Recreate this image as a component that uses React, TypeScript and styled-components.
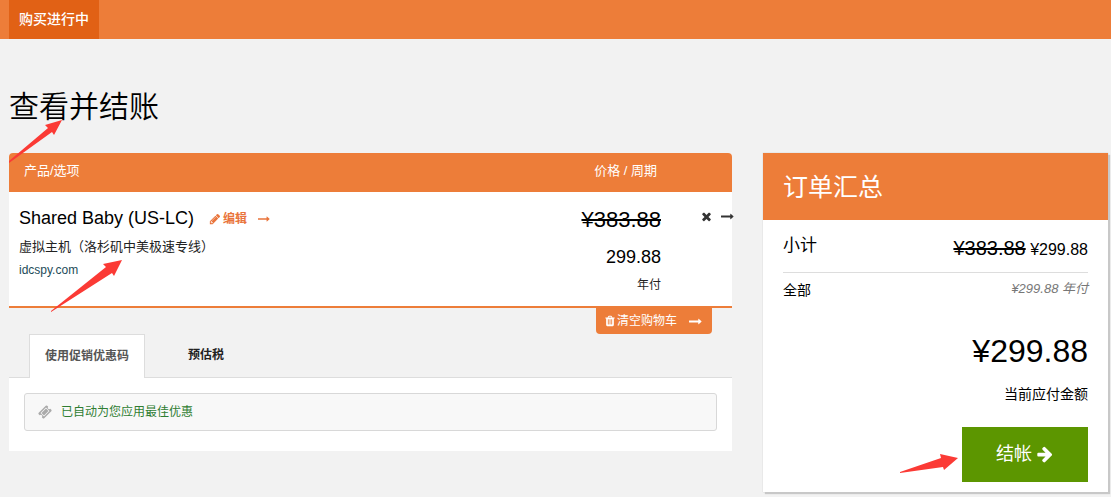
import React from "react";
import styled, { createGlobalStyle } from "styled-components";

const orange = "#ed7d39";

const GlobalStyle = createGlobalStyle`
  *, *::before, *::after { box-sizing: border-box; }
  body {
    margin: 0;
    background: #f2f2f2;
    color: #000;
    font-family: "Liberation Sans", "Noto Sans CJK SC", sans-serif;
    font-size: 14px;
    line-height: 20px;
  }
  h1, h2, h3, p, dl, dt, dd { margin: 0; font-weight: 400; }
  a { text-decoration: none; color: inherit; }
  button { font-family: inherit; border: 0; cursor: pointer; }
`;

const iconPaths = {
  pencil:
    "M491 1536l91-91-235-235-91 91v107h128v128h107zm523-928q0-22-22-22-10 0-17 7l-542 542q-7 7-7 17 0 22 22 22 10 0 17-7l542-542q7-7 7-17zm-54-192l416 416-832 832h-416v-416zm683 96q0 53-37 90l-166 166-416-416 166-165q36-38 90-38 53 0 91 38l235 234q37 39 37 91z",
  longArrow:
    "M1728 893q0 14-10 24l-384 354q-16 14-35 6-19-9-19-29v-224h-1248q-14 0-23-9t-9-23v-192q0-14 9-23t23-9h1248v-224q0-21 19-29t35 5l384 350q10 10 10 23z",
  times:
    "M1490 1322q0 40-28 68l-136 136q-28 28-68 28t-68-28l-294-294-294 294q-28 28-68 28t-68-28l-136-136q-28-28-28-68t28-68l294-294-294-294q-28-28-28-68t28-68l136-136q28-28 68-28t68 28l294 294 294-294q28-28 68-28t68 28l136 136q28 28 28 68t-28 68l-294 294 294 294q28 28 28 68z",
  trash:
    "M704 1376v-704q0-14-9-23t-23-9h-64q-14 0-23 9t-9 23v704q0 14 9 23t23 9h64q14 0 23-9t9-23zm256 0v-704q0-14-9-23t-23-9h-64q-14 0-23 9t-9 23v704q0 14 9 23t23 9h64q14 0 23-9t9-23zm256 0v-704q0-14-9-23t-23-9h-64q-14 0-23 9t-9 23v704q0 14 9 23t23 9h64q14 0 23-9t9-23zm-544-992h448l-48-117q-7-9-17-11h-317q-10 2-17 11zm928 32v64q0 14-9 23t-23 9h-96v948q0 83-47 143.5t-113 60.5h-832q-66 0-113-58.5t-47-141.5v-952h-96q-14 0-23-9t-9-23v-64q0-14 9-23t23-9h309l70-167q15-37 54-63t79-26h320q40 0 79 26t54 63l70 167h309q14 0 23 9t9 23z",
  ticket:
    "M1024 452l316 316-572 572-316-316zm-211 979l618-618q19-19 19-45t-19-45l-362-362q-18-18-45-18t-45 18l-618 618q-19 19-19 45t19 45l362 362q18 18 45 18t45-18zm889-637l-907 908q-37 37-90.5 37t-90.5-37l-126-126q56-56 56-136t-56-136-136-56-136 56l-125-126q-37-37-37-90.5t37-90.5l907-906q37-37 90.5-37t90.5 37l125 125q-56 56-56 136t56 136 136 56 136-56l126 125q37 37 37 90.5t-37 90.5z",
  arrow:
    "M1600 960q0 54-37 91l-651 651q-39 37-91 37-51 0-90-37l-75-75q-38-38-38-91t38-91l293-293h-704q-52 0-84.5-37.5t-32.5-90.5v-128q0-53 32.5-90.5t84.5-37.5h704l-293-294q-38-36-38-90t38-90l75-75q38-38 90-38 53 0 91 38l651 651q37 35 37 90z",
};

const IconSvg = styled.svg`
  display: block;
  flex: none;
  fill: currentColor;
`;

function Icon({ name, size }: { name: keyof typeof iconPaths; size: number }) {
  return (
    <IconSvg width={size} height={size} viewBox="0 0 1792 1792" aria-hidden="true">
      <path d={iconPaths[name]} />
    </IconSvg>
  );
}

const Pointer = styled.svg<{ $left: number; $top: number }>`
  position: absolute;
  left: ${(p) => p.$left}px;
  top: ${(p) => p.$top}px;
  fill: #fb3a35;
  pointer-events: none;
  z-index: 2;
`;

const TopBar = styled.nav`
  display: flex;
  padding-left: 9px;
  background: ${orange};
`;

const TopLink = styled.a`
  padding: 9px 10px 10px;
  background: #e16115;
  color: #fff;
  font-weight: 500;
`;

const Page = styled.div`
  padding: 48px 3px 5px 9px;
`;

const Title = styled.h1`
  position: relative;
  margin-bottom: 26px;
  font-size: 30px;
  line-height: 40px;
  font-weight: 350;
`;

const Columns = styled.div`
  display: flex;
  align-items: flex-start;
  gap: 31px;
`;

const Main = styled.main`
  flex: 723 1 0;
  min-width: 0;
`;

const CartTable = styled.table`
  width: 100%;
  table-layout: fixed;
  border-spacing: 0;
  border-bottom: 2px solid ${orange};
  background: #fff;
  border-radius: 4px 4px 0 0;
`;

const HeadCell = styled.th<{ $align?: string; $width?: number }>`
  width: ${(p) => (p.$width ? `${p.$width}px` : "auto")};
  padding: 8px 4px 11px 15px;
  background: ${orange};
  color: #fff;
  font-size: 13px;
  font-weight: 400;
  text-align: ${(p) => p.$align || "left"};
  &:first-child { border-top-left-radius: 4px; }
  &:last-child { border-top-right-radius: 4px; }
`;

const ProductCell = styled.td`
  position: relative;
  padding: 15px 10px 12px;
  vertical-align: top;
`;

const ProductLine = styled.div`
  display: flex;
  align-items: center;
  gap: 15px;
`;

const ProductName = styled.h3`
  font-size: 18px;
`;

const EditLink = styled.a`
  display: flex;
  align-items: center;
  gap: 2px;
  padding-top: 2px;
  color: #e9743b;
  font-size: 12px;
  font-weight: 700;
  svg + span { margin-right: 9px; }
`;

const Description = styled.p`
  margin: 8px 0 3px;
  font-size: 13px;
  color: #222;
`;

const Domain = styled.a`
  display: block;
  font-size: 12px;
  color: #1d4b58;
`;

const PriceCell = styled.td`
  padding: 18px 0 11px;
  text-align: right;
  vertical-align: top;
`;

const OldPrice = styled.del<{ $size: number }>`
  font-size: ${(p) => p.$size}px;
`;

const CartPrice = styled.p`
  margin: 15px 0 8px;
  font-size: 18px;
`;

const Cycle = styled.p`
  font-size: 12px;
  color: #222;
`;

const ActionCell = styled.td`
  padding: 18px 0 0 39px;
  vertical-align: top;
`;

const RemoveButton = styled.button`
  display: flex;
  gap: 8px;
  width: max-content;
  padding: 0;
  background: none;
  color: #333;
`;

const ClearButton = styled.button`
  display: flex;
  align-items: center;
  gap: 1px;
  margin: 0 20px 0 auto;
  padding: 3px 10px 3px 8px;
  border-radius: 0 0 4px 4px;
  background: ${orange};
  color: #fff;
  font-size: 12px;
  line-height: 20px;
  span { margin-right: 11px; }
`;

const Tabs = styled.div`
  display: flex;
  padding-left: 20px;
`;

const Tab = styled.button<{ $active?: boolean }>`
  margin-bottom: -1px;
  margin-right: 27px;
  padding: ${(p) => (p.$active ? "11px 15px 12px" : "10px 15px 13px")};
  border: 1px solid ${(p) => (p.$active ? "#ddd" : "transparent")};
  border-bottom: 0;
  background: ${(p) => (p.$active ? "#fff" : "transparent")};
  color: ${(p) => (p.$active ? "#555" : "#222")};
  font-size: 12px;
  line-height: 20px;
  font-weight: 700;
  z-index: 1;
`;

const TabPanel = styled.div`
  padding: 15px 15px 20px;
  border-top: 1px solid #ddd;
  background: #fff;
`;

const PromoBox = styled.div`
  display: flex;
  align-items: center;
  gap: 9px;
  padding: 8px 13px;
  border: 1px solid #d8d8d8;
  border-radius: 3px;
  background: #f8f8f8;
  color: #aaa;
`;

const PromoText = styled.p`
  color: #2f7d32;
  font-size: 12px;
`;

const Summary = styled.aside`
  flex: 345 1 0;
  min-width: 0;
  background: #fff;
  box-shadow: 2px 2px 1px #c8c8c8, 0 0 1px #bbb;
`;

const SummaryTitle = styled.h2`
  padding: 18px 20px 17px;
  background: ${orange};
  color: #fff;
  font-size: 25px;
  line-height: 32px;
`;

const SummaryBody = styled.div`
  padding: 16px 20px 10px;
`;

const SummaryRow = styled.dl<{ $main?: boolean }>`
  display: flex;
  justify-content: space-between;
  align-items: flex-start;
  ${(p) => p.$main && "padding-bottom: 10px; border-bottom: 1px solid #ddd; margin-bottom: 6px;"}
  dt {
    font-size: ${(p) => (p.$main ? 17 : 14)}px;
    line-height: ${(p) => (p.$main ? 20 : 22)}px;
  }
  dd {
    font-size: 16px;
    line-height: 24px;
  }
`;

const Recurring = styled.em`
  display: block;
  font-size: 13px;
  line-height: 20px;
  color: #777;
`;

const Total = styled.div`
  margin-top: 30px;
  text-align: right;
`;

const TotalAmount = styled.p`
  font-size: 32px;
  line-height: 40px;
`;

const TotalLabel = styled.p`
  margin: 13px 0 23px;
`;

const CheckoutButton = styled.button`
  position: relative;
  display: inline-flex;
  align-items: center;
  gap: 4px;
  padding: 15px 34px 16px;
  background: #5c9600;
  color: #fff;
  font-size: 18px;
  line-height: 24px;
  vertical-align: top;
`;

export default function App() {
  return (
    <>
      <GlobalStyle />
      <TopBar>
        <TopLink href="#">购买进行中</TopLink>
      </TopBar>
      <Page>
        <Title>
          查看并结账
          <Pointer $left={0} $top={33} width="54" height="44" viewBox="0 0 54 44" aria-hidden="true">
            <path d="M53 0L36 5L39 8L0 41V43L43 12L45 15Z" />
          </Pointer>
        </Title>
        <Columns>
          <Main>
            <CartTable>
              <thead>
                <tr>
                  <HeadCell>产品/选项</HeadCell>
                  <HeadCell $align="right" $width={150}>
                    价格 / 周期
                  </HeadCell>
                  <HeadCell $width={71} aria-label="操作" />
                </tr>
              </thead>
              <tbody>
                <tr>
                  <ProductCell>
                    <ProductLine>
                      <ProductName>Shared Baby (US-LC)</ProductName>
                      <EditLink href="#">
                        <Icon name="pencil" size={12} />
                        <span>编辑</span>
                        <Icon name="longArrow" size={12} />
                      </EditLink>
                    </ProductLine>
                    <Description>虚拟主机（洛杉矶中美极速专线）</Description>
                    <Domain href="#">idcspy.com</Domain>
                    <Pointer $left={42} $top={68} width="72" height="53" viewBox="0 0 72 53" aria-hidden="true">
                      <path d="M71 0L52 4L55 7L0 51V52L61 13L63 16Z" />
                    </Pointer>
                  </ProductCell>
                  <PriceCell>
                    <OldPrice $size={22}>¥383.88</OldPrice>
                    <CartPrice>299.88</CartPrice>
                    <Cycle>年付</Cycle>
                  </PriceCell>
                  <ActionCell>
                    <RemoveButton aria-label="移除">
                      <Icon name="times" size={13} />
                      <Icon name="longArrow" size={13} />
                    </RemoveButton>
                  </ActionCell>
                </tr>
              </tbody>
            </CartTable>
            <ClearButton>
              <Icon name="trash" size={12} />
              <span>清空购物车</span>
              <Icon name="longArrow" size={13} />
            </ClearButton>
            <Tabs role="tablist">
              <Tab $active role="tab" aria-selected="true">
                使用促销优惠码
              </Tab>
              <Tab role="tab" aria-selected="false">
                预估税
              </Tab>
            </Tabs>
            <TabPanel role="tabpanel">
              <PromoBox>
                <Icon name="ticket" size={14} />
                <PromoText>已自动为您应用最佳优惠</PromoText>
              </PromoBox>
            </TabPanel>
          </Main>
          <Summary>
            <SummaryTitle>订单汇总</SummaryTitle>
            <SummaryBody>
              <SummaryRow $main>
                <dt>小计</dt>
                <dd>
                  <OldPrice $size={20}>¥383.88</OldPrice> ¥299.88
                </dd>
              </SummaryRow>
              <SummaryRow>
                <dt>全部</dt>
                <dd>
                  <Recurring>¥299.88 年付</Recurring>
                </dd>
              </SummaryRow>
              <Total>
                <TotalAmount>¥299.88</TotalAmount>
                <TotalLabel>当前应付金额</TotalLabel>
                <CheckoutButton>
                  结帐
                  <Icon name="arrow" size={18} />
                  <Pointer $left={-62} $top={27} width="59" height="20" viewBox="0 0 59 20" aria-hidden="true">
                    <path d="M58 4L40 0L41 4L0 18V19L43 13L44 16Z" />
                  </Pointer>
                </CheckoutButton>
              </Total>
            </SummaryBody>
          </Summary>
        </Columns>
      </Page>
    </>
  );
}
